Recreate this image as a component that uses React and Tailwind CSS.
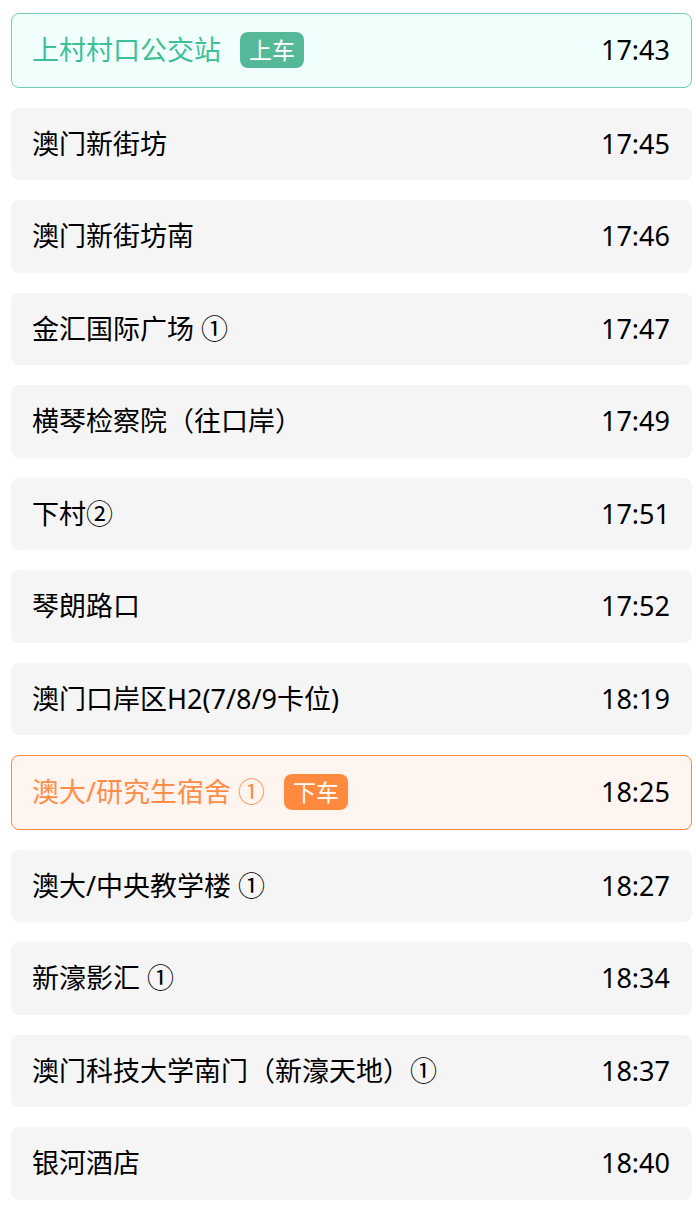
import React from 'react';

const stops = [
  { name: '上村村口公交站', time: '17:43', tag: 'on' },
  { name: '澳门新街坊', time: '17:45' },
  { name: '澳门新街坊南', time: '17:46' },
  { name: '金汇国际广场 ①', time: '17:47' },
  { name: '横琴检察院（往口岸）', time: '17:49' },
  { name: '下村②', time: '17:51' },
  { name: '琴朗路口', time: '17:52' },
  { name: '澳门口岸区H2(7/8/9卡位)', time: '18:19' },
  { name: '澳大/研究生宿舍 ①', time: '18:25', tag: 'off' },
  { name: '澳大/中央教学楼 ①', time: '18:27' },
  { name: '新濠影汇 ①', time: '18:34' },
  { name: '澳门科技大学南门（新濠天地）①', time: '18:37' },
  { name: '银河酒店', time: '18:40' },
];

function StopRow({ stop }) {
  if (stop.tag === 'on') {
    return (
      <div className="flex items-center justify-between h-[74.5px] pl-[20px] pr-[21px] rounded-lg border border-[#6fcdb1] bg-[#f1fffc]">
        <div className="flex items-center">
          <span className="text-[#3dbf98]">{stop.name}</span>
          <span className="ml-[19px] h-[36px] px-[9px] rounded-lg bg-[#55b899] text-white text-[23px] flex items-center">上车</span>
        </div>
        <span className="text-black">{stop.time}</span>
      </div>
    );
  }
  if (stop.tag === 'off') {
    return (
      <div className="flex items-center justify-between h-[74.5px] pl-[20px] pr-[21px] rounded-lg border border-[#ff8a45] bg-[#fff5f0]">
        <div className="flex items-center">
          <span className="text-[#ff8c47]">{stop.name}</span>
          <span className="ml-[19px] h-[36px] px-[9px] rounded-lg bg-[#ff8a3e] text-white text-[23px] flex items-center">下车</span>
        </div>
        <span className="text-black">{stop.time}</span>
      </div>
    );
  }
  return (
    <div className="flex items-center justify-between h-[72.5px] pl-[21px] pr-[22px] rounded-lg bg-[#f5f5f5]">
      <span className="text-black">{stop.name}</span>
      <span className="text-black">{stop.time}</span>
    </div>
  );
}

export default function App() {
  return (
    <div
      className="min-h-screen bg-white pt-[13px] pl-[11px] pr-[4px] text-[27px]"
      style={{ fontFamily: '"Noto Sans", "Noto Sans CJK SC", sans-serif' }}
    >
      <div className="flex flex-col gap-[20px]">
        {stops.map((s) => (
          <StopRow key={s.name} stop={s} />
        ))}
      </div>
    </div>
  );
}
